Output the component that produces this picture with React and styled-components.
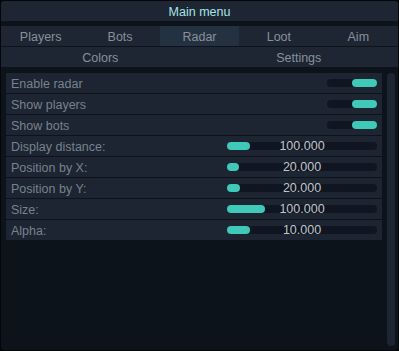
import React from "react";
import styled, { createGlobalStyle } from "styled-components";

const Global = createGlobalStyle`
  html, body { margin: 0; padding: 0; background: #05080c; }
  body { font-family: "Liberation Sans", Arial, sans-serif; }
`;

const Window = styled.div`
  width: 399px;
  height: 351px;
  box-sizing: border-box;
  border: 1px solid #04070a;
  border-radius: 4px;
  background: #0d131b;
  display: flex;
  flex-direction: column;
  overflow: hidden;
`;

const TitleBar = styled.div`
  height: 20px;
  box-sizing: border-box;
  padding-top: 1px;
  background: #1d2632;
  color: #a9e3ea;
  font-size: 12.5px;
  display: flex;
  align-items: center;
  justify-content: center;
`;

const TabRow = styled.div`
  display: grid;
  grid-template-columns: repeat(${(p) => p.$cols}, 1fr);
  height: 20px;
  background: #1d2632;
  margin-top: ${(p) => p.$top}px;
`;

const Tab = styled.div`
  display: flex;
  align-items: center;
  justify-content: center;
  box-sizing: border-box;
  padding-top: 2px;
  font-size: 12.5px;
  color: #87919c;
  background: ${(p) => (p.$active ? "#243141" : "transparent")};
`;

const Body = styled.div`
  display: flex;
  margin-top: 6px;
  padding: 0 3px 0 5px;
  gap: 5px;
  height: 273px;
`;

const List = styled.div`
  flex: 1;
  display: flex;
  flex-direction: column;
  gap: 1px;
  align-self: flex-start;
`;

const Row = styled.div`
  height: 20px;
  background: #1c2531;
  display: flex;
  align-items: center;
  padding: 0 5px;
  position: relative;
`;

const Label = styled.span`
  flex: 1;
  font-size: 12.5px;
  color: #77828e;
  padding-top: 1px;
`;

const Track = styled.div`
  position: relative;
  width: ${(p) => p.$w}px;
  height: 8px;
  border-radius: 4px;
  background: #0f1621;
  display: flex;
  justify-content: ${(p) => (p.$right ? "flex-end" : "flex-start")};
`;

const Knob = styled.div`
  height: 8px;
  border-radius: 4px;
  background: #40c8b9;
`;

const Value = styled.span`
  position: absolute;
  left: 0;
  right: 0;
  top: 50%;
  transform: translateY(-45%);
  text-align: center;
  font-size: 12.5px;
  color: #c0c4c8;
  line-height: 1;
`;

const Scrollbar = styled.div`
  width: 8px;
  height: 273px;
  border-radius: 4px;
  background: #1c2531;
`;

const toggles = ["Enable radar", "Show players", "Show bots"];
const sliders = [
  { label: "Display distance:", value: "100.000", fill: 23 },
  { label: "Position by X:", value: "20.000", fill: 12 },
  { label: "Position by Y:", value: "20.000", fill: 13 },
  { label: "Size:", value: "100.000", fill: 38 },
  { label: "Alpha:", value: "10.000", fill: 23 },
];

export default function App() {
  return (
    <>
      <Global />
      <Window>
        <TitleBar>Main menu</TitleBar>
        <TabRow $cols={5} $top={5}>
          {["Players", "Bots", "Radar", "Loot", "Aim"].map((t) => (
            <Tab key={t} $active={t === "Radar"}>
              {t}
            </Tab>
          ))}
        </TabRow>
        <TabRow $cols={2} $top={1}>
          <Tab>Colors</Tab>
          <Tab>Settings</Tab>
        </TabRow>
        <Body>
          <List>
            {toggles.map((t) => (
              <Row key={t}>
                <Label>{t}</Label>
                <Track $w={50} $right>
                  <Knob style={{ width: 25 }} />
                </Track>
              </Row>
            ))}
            {sliders.map((s) => (
              <Row key={s.label}>
                <Label>{s.label}</Label>
                <Track $w={150}>
                  <Knob style={{ width: s.fill }} />
                  <Value>{s.value}</Value>
                </Track>
              </Row>
            ))}
          </List>
          <Scrollbar />
        </Body>
      </Window>
    </>
  );
}
